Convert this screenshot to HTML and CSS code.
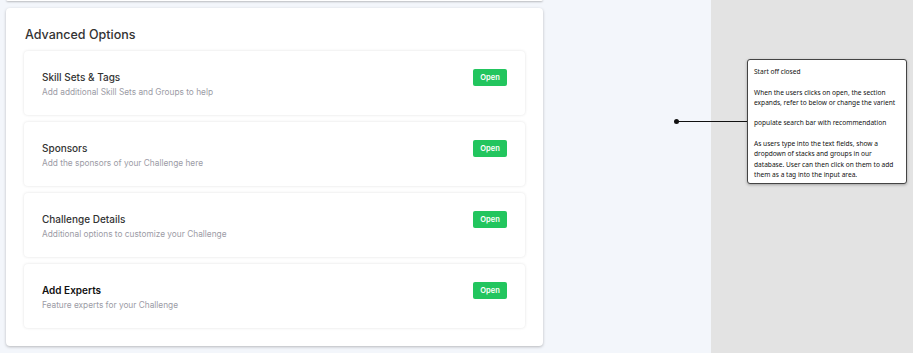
FILE: index.html
```html
<!DOCTYPE html>
<html lang="en">
  <head>
    <meta charset="UTF-8" />
    <meta name="viewport" content="width=device-width, initial-scale=1.0" />
    <title>Advanced Options</title>
    <link rel="stylesheet" href="styles.css">
  </head>
  <body>
    <div class="canvas">
      <div class="main">
        <div class="prev-card"></div>
        <div class="panel">
          <h2 class="panel-title">Advanced Options</h2>
          <div class="option">
            <div class="option-text">
              <h3>Skill Sets &amp; Tags</h3>
              <p>Add additional Skill Sets and Groups to help</p>
            </div>
            <button class="open-btn">Open</button>
          </div>
          <div class="option">
            <div class="option-text">
              <h3>Sponsors</h3>
              <p>Add the sponsors of your Challenge here</p>
            </div>
            <button class="open-btn">Open</button>
          </div>
          <div class="option">
            <div class="option-text">
              <h3>Challenge Details</h3>
              <p>Additional options to customize your Challenge</p>
            </div>
            <button class="open-btn">Open</button>
          </div>
          <div class="option">
            <div class="option-text">
              <h3 class="strong">Add Experts</h3>
              <p>Feature experts for your Challenge</p>
            </div>
            <button class="open-btn">Open</button>
          </div>
        </div>
      </div>
      <div class="side"></div>

      <div class="connector"><span class="dot"></span></div>
      <div class="note">
        <p>Start off closed</p>
        <p>When the users clicks on open, the section<br>expands, refer to below or change the varient</p>
        <p>populate search bar with recommendation</p>
        <p>As users type into the text fields, show a<br>dropdown of stacks and groups in our<br>database. User can then click on them to add<br>them as a tag into the input area.</p>
      </div>
    </div>
  </body>
</html>
```

FILE: styles.css
```css
body {
  margin: 0;
  font-family: Inter, "Noto Sans", sans-serif;
  background: #e3e3e3;
}
.canvas {
  position: relative;
  display: flex;
  width: 913px;
  height: 353px;
  overflow: hidden;
}
.main {
  width: 711px;
  background: #f3f6fb;
  padding-left: 6px;
  box-sizing: border-box;
}
.side {
  flex: 1;
  background: #e3e3e3;
}
.prev-card {
  width: 537px;
  height: 2px;
  margin-top: -1px;
  background: #fff;
  border-radius: 0 0 4px 4px;
  box-shadow: 0 1px 2px rgba(0, 0, 0, 0.25);
}
.panel {
  width: 537px;
  box-sizing: border-box;
  margin-top: 7px;
  padding: 17px 18px 18px 18px;
  background: #fff;
  border-radius: 4px;
  box-shadow: 0 1px 3px rgba(0, 0, 0, 0.25);
  display: flex;
  flex-direction: column;
  gap: 7px;
}
.panel-title {
  margin: 0 0 -1px 1px;
  font-size: 12.5px;
  font-weight: 500;
  color: #333;
  line-height: 20px;
}
.option {
  height: 64px;
  box-sizing: border-box;
  padding: 0 18px 0 18px;
  border-radius: 4px;
  box-shadow: 0 0 3px rgba(0, 0, 0, 0.12);
  display: flex;
  align-items: center;
  justify-content: space-between;
}
.option-text {
  padding-top: 1px;
}
.option-text h3 {
  margin: 0 0 2px;
  font-size: 10px;
  font-weight: 500;
  color: #333;
  line-height: 14px;
}
.option-text h3.strong {
  color: #111;
  font-weight: 600;
}
.option-text p {
  margin: 0;
  font-size: 8.3px;
  color: #9b9ba5;
  line-height: 12px;
}
.open-btn {
  align-self: flex-start;
  margin-top: 18px;
  width: 34px;
  height: 17px;
  padding: 0;
  border: none;
  border-radius: 2px;
  background: #22c55e;
  color: #fff;
  font-family: Inter, sans-serif;
  font-size: 7.5px;
  font-weight: 600;
  cursor: pointer;
}
.connector {
  position: absolute;
  left: 676px;
  top: 121px;
  width: 71px;
  height: 1px;
  background: #111;
}
.dot {
  position: absolute;
  left: -2px;
  top: -2px;
  width: 5px;
  height: 5px;
  border-radius: 50%;
  background: #111;
}
.note {
  position: absolute;
  left: 747px;
  top: 59px;
  width: 160px;
  height: 125px;
  box-sizing: border-box;
  padding: 7px 6px;
  background: #fff;
  border: 1px solid #444;
  border-radius: 3px;
  box-shadow: 0 1px 3px rgba(0, 0, 0, 0.3);
  font-family: "Noto Sans", sans-serif;
  font-size: 6.6px;
  line-height: 10.3px;
  color: #111;
  white-space: nowrap;
}
.note p {
  margin: 0 0 10.3px;
}
```
